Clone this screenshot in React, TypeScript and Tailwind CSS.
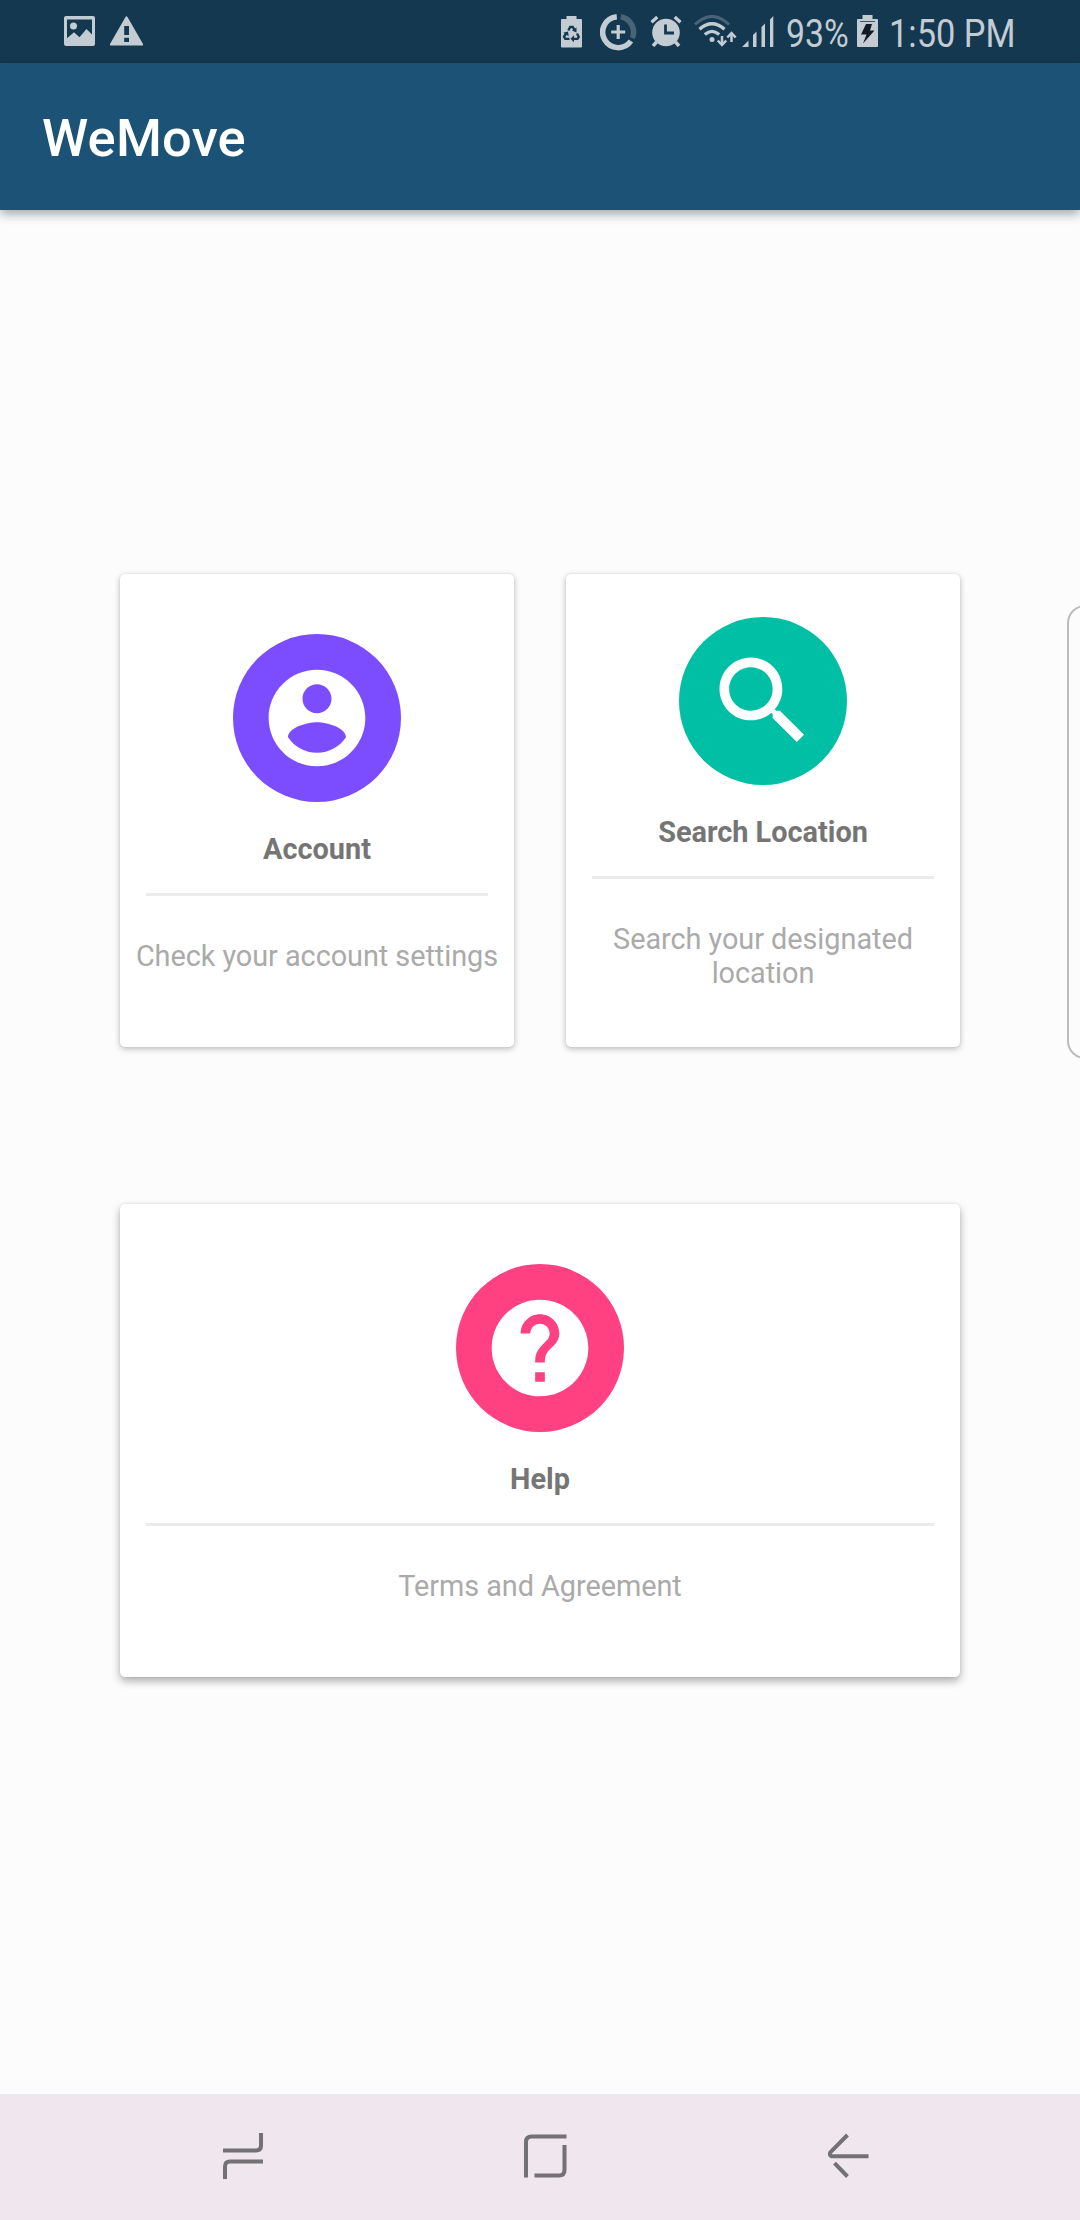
import type { ReactNode } from "react";

const ICON = "#c4ccd3";

function StatusBar() {
  return (
    <div className="flex h-[63px] items-start bg-[#14384f] text-[#c4ccd3]">
      <svg className="mt-4 ml-16 h-[30px] w-[31px]" viewBox="0 0 31 30" fill={ICON}>
        <path fillRule="evenodd" d="M2 0h27a2 2 0 0 1 2 2v26a2 2 0 0 1-2 2H2a2 2 0 0 1-2-2V2a2 2 0 0 1 2-2zM3 3.500v18.700l7-6 5.500 5 7-8.200 5.500 5.500V3.500z" />
        <circle cx="9.500" cy="10" r="3.500" />
      </svg>
      <svg className="mt-4 ml-[15px] h-[30px] w-[33px]" viewBox="0 0 33 30" fill={ICON}>
        <path fillRule="evenodd" d="M15.500 1q1-1.500 2 0L33 28q.5 1.500-1 1.500H1Q-.5 29.500 0 28zM14.200 10v9h4.800v-9zM14.200 21.800v4.200h4.800v-4.200z" />
      </svg>
      <svg className="mt-4 ml-[418px] h-8 w-[21px]" viewBox="0 0 21 32" fill={ICON}>
        <path d="M5.500 0h10v3H20a1 1 0 0 1 1 1v26.500a1 1 0 0 1-1 1H1a1 1 0 0 1-1-1V4a1 1 0 0 1 1-1h4.500z" />
        <g fill="none" stroke="#14384f" strokeWidth="2.300">
          <path d="M7.300 14.500 9.200 11h2.600l2 3.600" />
          <path d="M16 17.500l1.800 3.400-1.300 2h-4.500" />
          <path d="M8.500 22.900H4.300L3 20.800l2.200-3.600" />
        </g>
        <path fill="#14384f" d="M15.500 11.500v5l-4.500-2zM13 19.300v7l-3.500-3.500zM2.200 16.800l4.800-1.300.7 4.700z" />
      </svg>
      <svg className="mt-[13px] ml-[18px] h-[38px] w-[37px]" viewBox="0 0 37 38" fill="none">
        <path d="M16.800 3.700A15.500 15.500 0 1 0 30.900 28" stroke={ICON} strokeWidth="5.500" />
        <path d="M20.800 3.700A15.500 15.500 0 0 1 32.300 25" stroke="#496477" strokeWidth="5.500" />
        <path d="M18.200 12v14M11.200 19h14" stroke={ICON} strokeWidth="3.200" />
      </svg>
      <svg className="mt-4 ml-[13px] h-[31px] w-8" viewBox="0 0 32 31" fill="none" stroke={ICON}>
        <circle cx="16" cy="16.500" r="13.800" fill={ICON} stroke="none" />
        <path d="M1.500 6.300 7.300 1M30.500 6.300 24.700 1" strokeWidth="3.300" />
        <path d="m6.500 26-3.500 4M25.500 26l3.500 4" strokeWidth="3.500" />
        <path d="M15.500 8.500V17H24" stroke="#14384f" strokeWidth="2.800" />
      </svg>
      <svg className="mt-[15px] ml-3 h-8 w-[43px]" viewBox="0 0 43 32" fill="none" stroke={ICON}>
        <path d="M1 9.500Q18-6.500 35 9.500" stroke="#496477" strokeWidth="3" />
        <path d="M5.500 14.200Q18 3.200 30.500 14.200" strokeWidth="3.300" />
        <path d="M10.800 19.500Q18 13.200 25.200 19.500" strokeWidth="3.300" />
        <circle cx="18" cy="24.500" r="2.500" fill={ICON} stroke="none" />
        <path d="M28 21v8M37.500 27v-8" strokeWidth="2.500" />
        <path d="m23.800 25.500 4.200 4.500 4.200-4.500M33.300 22.500l4.200-4.500 4.200 4.500" strokeWidth="2.500" />
      </svg>
      <svg className="mt-4 ml-[5px] h-[31px] w-8" viewBox="0 0 32 31" fill={ICON}>
        <path d="M0 31l6.500-6.500V31zM11 31V19l3.500-3.500V31zM19.500 31V11L23 7.500V31zM28 31V3.500L31.300 0v31z" />
      </svg>
      <div className="mt-[11px] ml-[12px] h-[46px] w-[70px]">
        <span className="block origin-left scale-x-[0.855] text-[39.500px] leading-[46px] whitespace-nowrap">93%</span>
      </div>
      <svg className="mt-[15px] ml-px h-8 w-[21px]" viewBox="0 0 21 32" fill={ICON}>
        <path d="M5.500 0h10v4H20a1 1 0 0 1 1 1v26a1 1 0 0 1-1 1H1a1 1 0 0 1-1-1V5a1 1 0 0 1 1-1h4.500z" />
        <path d="M3 6.500h15" stroke="#14384f" strokeWidth=".8" />
        <path fill="#121c26" d="M9 9h6l-2 6.500h4.500L6 28.500l3.500-9H4z" />
      </svg>
      <div className="mt-[11px] ml-[11px] h-[46px] w-[130px]">
        <span className="block origin-left scale-x-[0.87] text-[39.500px] leading-[46px] whitespace-nowrap">1:50 PM</span>
      </div>
    </div>
  );
}

type CardProps = {
  title: string;
  text: string;
  color: string;
  className: string;
  children: ReactNode;
};

function Card({ title, text, color, className, children }: CardProps) {
  return (
    <section className={`flex h-[473px] flex-col items-center justify-center rounded-[5px] bg-white ${className}`}>
      <div className={`flex size-[168px] items-center justify-center rounded-full ${color}`}>
        <svg className="size-[116px]" viewBox="0 0 24 24" fill="white">
          {children}
        </svg>
      </div>
      <h2 className="mt-[26px] pt-1 pb-px text-[28.875px] leading-[34px] font-bold text-[#757575]">{title}</h2>
      <div className="mt-[26px] h-[3px] w-full px-[26px]">
        <div className="h-full bg-[#ebebeb]" />
      </div>
      <p className="mt-[39px] mb-[13px] px-3 pt-1 pb-px text-center text-[28.875px] leading-[34px] tracking-[-0.05px] text-[#aaaaaa]">{text}</p>
    </section>
  );
}

function NavBar() {
  return (
    <nav className="flex h-[126px] items-start bg-[#f0e6ee] pt-[39px]">
      <svg className="ml-[223px] h-[46px] w-10" viewBox="0 0 40 46" fill="none" stroke="#737173" strokeWidth="4">
        <path d="M0 17.500h33q5 0 5-5V0M2 46V33.500q0-5 5-5H40" />
      </svg>
      <svg className="mt-px ml-[261px] h-11 w-[43px]" viewBox="0 0 43 44" fill="none" stroke="#737173" strokeWidth="4">
        <path d="M2 43.500V8q0-5.500 5.500-5.500H42.500M40.500 11v25q0 5.500-5.500 5.500H10.500" />
      </svg>
      <svg className="ml-[261px] h-[46px] w-[41px]" viewBox="0 0 41 46" fill="none" stroke="#737173" strokeWidth="4">
        <path d="M19.500 2 2.800 18.800C1 20.600 2 23.200 4.500 23.200H40.500M6.500 30.200l13 13.300" />
      </svg>
    </nav>
  );
}

export default function App() {
  return (
    <div className="relative flex h-[2220px] w-[1080px] flex-col overflow-hidden bg-[#fcfcfc] font-['Roboto',sans-serif]">
      <StatusBar />
      <header className="flex h-[147px] items-center bg-[#1b5275] px-[42px] pt-[3px] shadow-[0_4px_10px_rgba(0,0,0,0.35)]">
        <h1 className="text-[52.500px] leading-[62px] font-medium tracking-[0.2px] text-white">WeMove</h1>
      </header>
      <main className="flex flex-1 flex-col gap-[157px] px-[120px] pt-[364px]">
        <div className="flex gap-[52px]">
          <Card title="Account" text="Check your account settings" color="bg-[#7c4dff]" className="w-[394px] shadow-[0_2px_6px_rgba(0,0,0,0.26),0_0_2px_rgba(0,0,0,0.1)]">
            <path d="M12 2C6.480 2 2 6.480 2 12s4.480 10 10 10 10-4.480 10-10S17.520 2 12 2zm0 3c1.660 0 3 1.340 3 3s-1.340 3-3 3-3-1.340-3-3 1.340-3 3-3zm0 14.200c-2.500 0-4.710-1.280-6-3.220.03-1.990 4-3.080 6-3.080 1.990 0 5.970 1.090 6 3.080-1.290 1.940-3.500 3.220-6 3.220z" />
          </Card>
          <Card title="Search Location" text="Search your designated location" color="bg-[#00bfa5]" className="w-[394px] shadow-[0_2px_6px_rgba(0,0,0,0.26),0_0_2px_rgba(0,0,0,0.1)]">
            <path d="M15.500 14h-.79l-.28-.27C15.410 12.590 16 11.110 16 9.500 16 5.910 13.090 3 9.500 3S3 5.910 3 9.500 5.910 16 9.500 16c1.610 0 3.090-.59 4.230-1.570l.27.28v.79l5 4.990L20.490 19l-4.990-5zm-6 0C7.010 14 5 11.990 5 9.500S7.010 5 9.500 5 14 7.010 14 9.500 11.990 14 9.500 14z" />
          </Card>
        </div>
        <Card title="Help" text="Terms and Agreement" color="bg-[#ff4081]" className="w-full shadow-[0_4px_8px_rgba(0,0,0,0.32),0_0_2px_rgba(0,0,0,0.1)]">
          <path d="M12 2C6.480 2 2 6.480 2 12s4.480 10 10 10 10-4.480 10-10S17.520 2 12 2zm1 17h-2v-2h2v2zm2.070-7.750l-.9.920C13.450 12.900 13 13.500 13 15h-2v-.5c0-1.100.45-2.100 1.170-2.830l1.240-1.260c.37-.36.590-.86.590-1.410 0-1.100-.9-2-2-2s-2 .9-2 2H8c0-2.210 1.790-4 4-4s4 1.790 4 4c0 .88-.36 1.680-.93 2.250z" />
        </Card>
      </main>
      <NavBar />
      {/* Edge panel handle floating over the right side of the screen */}
      <div className="absolute top-[605px] left-[1067px] h-[454px] w-10 rounded-[18px] border-2 border-[#bcbcbc]" />
    </div>
  );
}
